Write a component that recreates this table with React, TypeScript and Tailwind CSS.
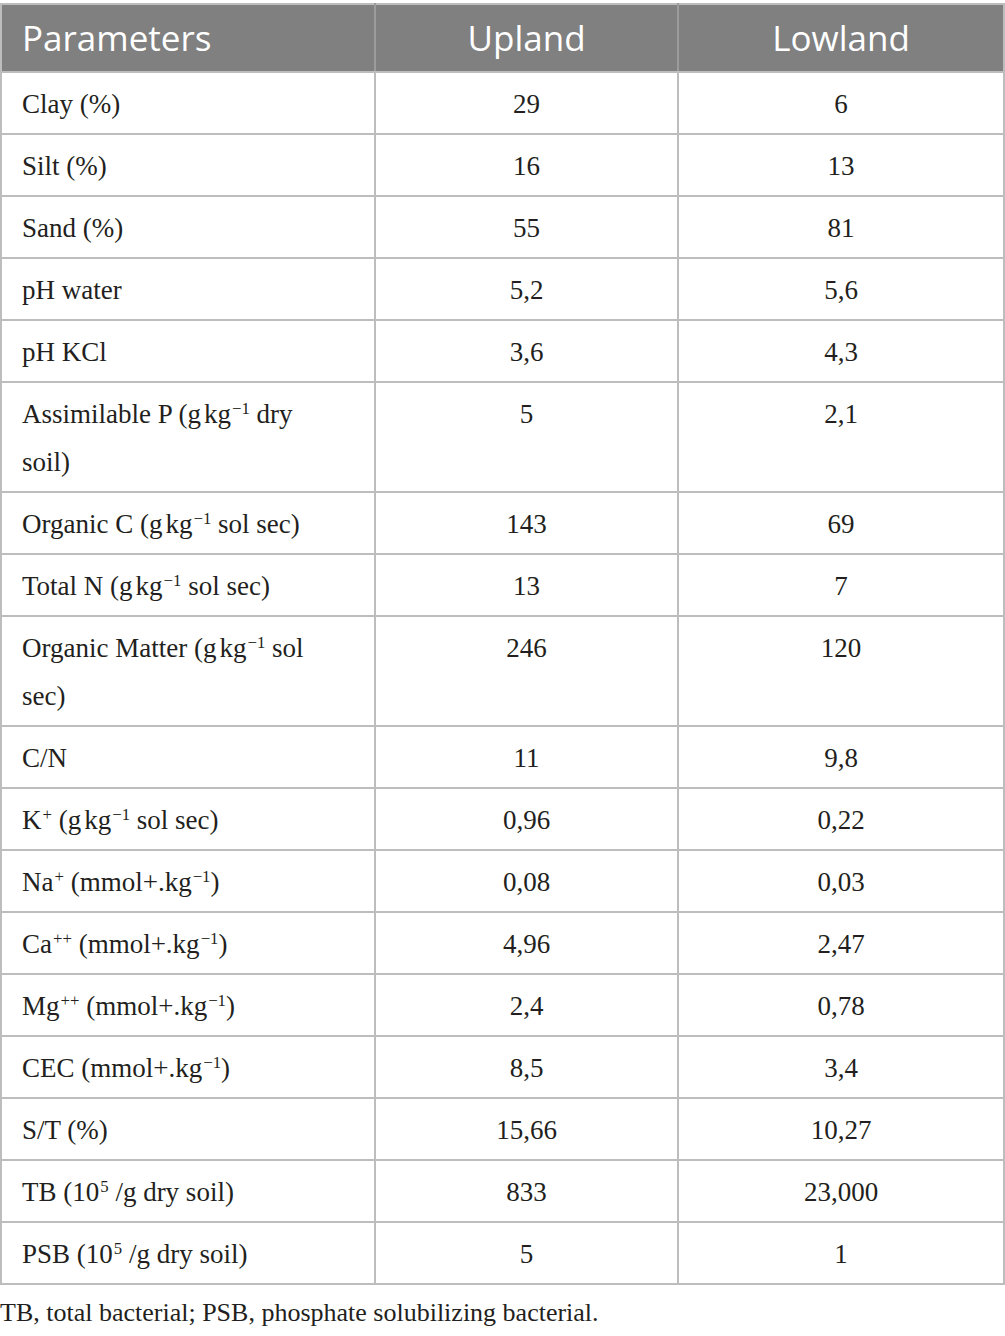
import React from "react"

const Sup = ({ children }: { children: React.ReactNode }) => (
  <sup className="text-[0.62em] relative -top-[0.55em] ml-[1px]">{children}</sup>
)

const gkg = (
  <>
    g<span className="ml-[3px]">kg</span>
    <Sup>−1</Sup>
  </>
)

type Row = { label: React.ReactNode; up: string; low: string }

const rows: Row[] = [
  { label: "Clay (%)", up: "29", low: "6" },
  { label: "Silt (%)", up: "16", low: "13" },
  { label: "Sand (%)", up: "55", low: "81" },
  { label: "pH water", up: "5,2", low: "5,6" },
  { label: "pH KCl", up: "3,6", low: "4,3" },
  {
    label: (
      <>
        Assimilable P ({gkg} dry
        <br />
        soil)
      </>
    ),
    up: "5",
    low: "2,1",
  },
  { label: <>Organic C ({gkg} sol sec)</>, up: "143", low: "69" },
  { label: <>Total N ({gkg} sol sec)</>, up: "13", low: "7" },
  {
    label: (
      <>
        Organic Matter ({gkg} sol
        <br />
        sec)
      </>
    ),
    up: "246",
    low: "120",
  },
  { label: "C/N", up: "11", low: "9,8" },
  {
    label: (
      <>
        K<Sup>+</Sup> ({gkg} sol sec)
      </>
    ),
    up: "0,96",
    low: "0,22",
  },
  {
    label: (
      <>
        Na<Sup>+</Sup> (mmol+.kg<Sup>−1</Sup>)
      </>
    ),
    up: "0,08",
    low: "0,03",
  },
  {
    label: (
      <>
        Ca<Sup>++</Sup> (mmol+.kg<Sup>−1</Sup>)
      </>
    ),
    up: "4,96",
    low: "2,47",
  },
  {
    label: (
      <>
        Mg<Sup>++</Sup> (mmol+.kg<Sup>−1</Sup>)
      </>
    ),
    up: "2,4",
    low: "0,78",
  },
  {
    label: (
      <>
        CEC (mmol+.kg<Sup>−1</Sup>)
      </>
    ),
    up: "8,5",
    low: "3,4",
  },
  { label: "S/T (%)", up: "15,66", low: "10,27" },
  {
    label: (
      <>
        TB (10<Sup>5</Sup> /g dry soil)
      </>
    ),
    up: "833",
    low: "23,000",
  },
  {
    label: (
      <>
        PSB (10<Sup>5</Sup> /g dry soil)
      </>
    ),
    up: "5",
    low: "1",
  },
]

export default function App() {
  return (
    <div className="w-[1005px] bg-white pt-[3px] text-[#231f20] font-['Liberation_Serif',serif]">
      <table className="w-full border-collapse table-fixed">
        <colgroup>
          <col className="w-[374px]" />
          <col className="w-[303px]" />
          <col />
        </colgroup>
        <thead>
          <tr className="bg-[#7f807f] text-white font-['Open_Sans',sans-serif] text-[35px] leading-[48px]">
            <th className="border-2 border-[#bdbdbd] border-r-[#9c9c9c] text-left font-normal pl-[20px] h-[68px]">
              Parameters
            </th>
            <th className="border-2 border-[#bdbdbd] border-r-[#9c9c9c] border-l-[#9c9c9c] font-normal">
              Upland
            </th>
            <th className="border-2 border-[#bdbdbd] border-l-[#9c9c9c] font-normal">Lowland</th>
          </tr>
        </thead>
        <tbody className="text-[27px] leading-[48px]">
          {rows.map((r, i) => (
            <tr key={i}>
              <td className="border-2 border-[#bdbdbd] pl-[20px] pr-2 pt-[7px] pb-[5px] align-top">
                {r.label}
              </td>
              <td className="border-2 border-[#bdbdbd] text-center pt-[7px] pb-[5px] align-top">
                {r.up}
              </td>
              <td className="border-2 border-[#bdbdbd] text-center pt-[7px] pb-[5px] align-top">
                {r.low}
              </td>
            </tr>
          ))}
        </tbody>
      </table>
      <p className="text-[26px] leading-[48px] mt-[4px]">
        TB, total bacterial; PSB, phosphate solubilizing bacterial.
      </p>
    </div>
  )
}
